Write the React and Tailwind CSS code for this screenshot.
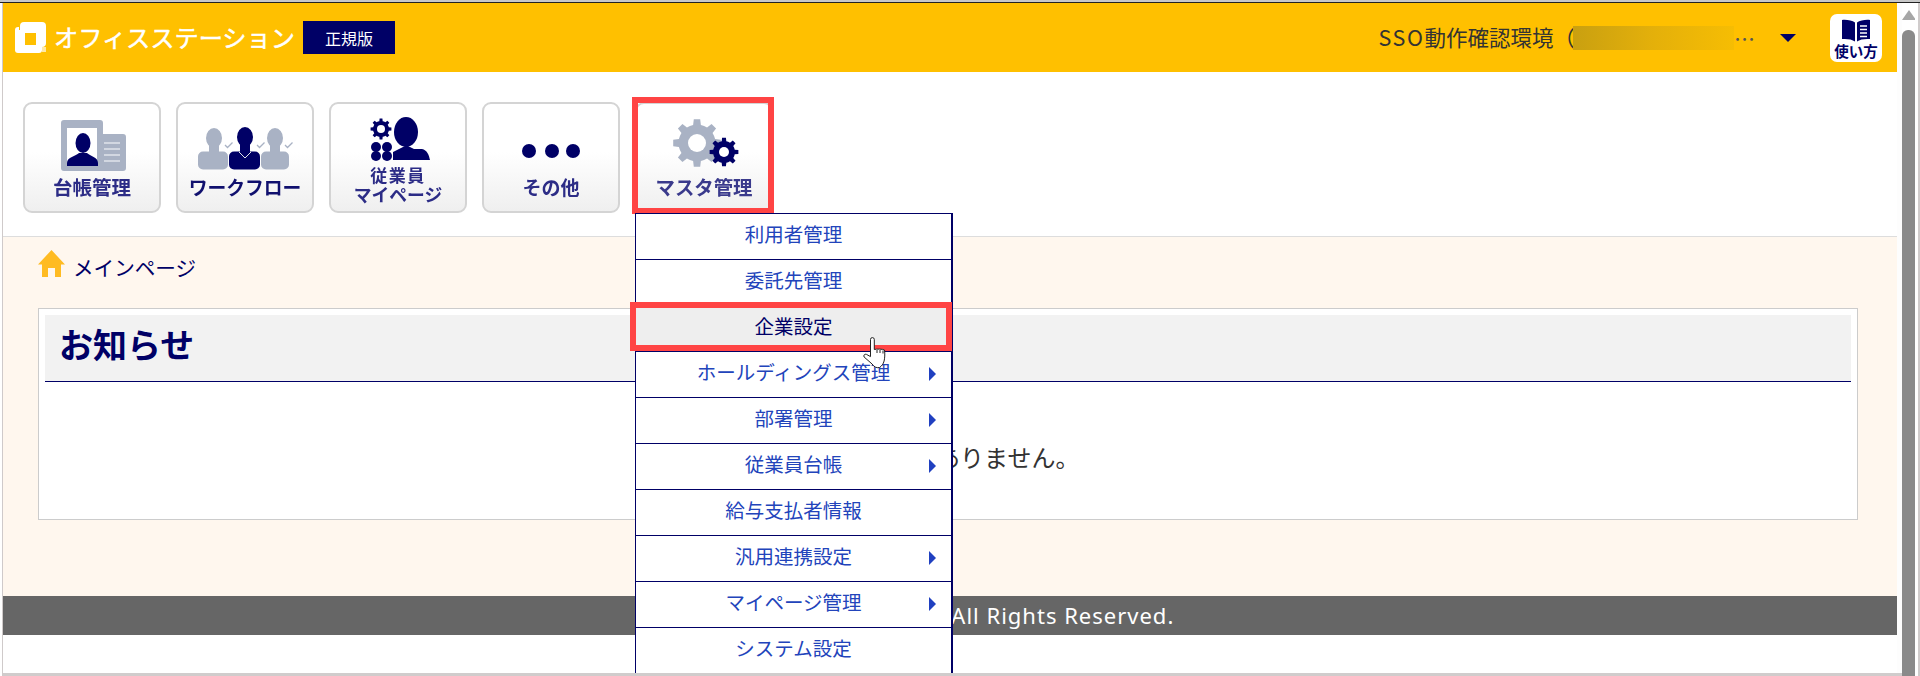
const JP = '"Noto Sans CJK JP", sans-serif';
const NAVY = '#000066';
const SLATE = '#a9b2c4';

function gearPoints(cx, cy, R, r, n) {
  const pts = [];
  const step = (Math.PI * 2) / n;
  for (let i = 0; i < n; i++) {
    const a = i * step - Math.PI / 2;
    const list = [
      [a - step * 0.5, r],
      [a - step * 0.27, r],
      [a - step * 0.17, R],
      [a + step * 0.17, R],
      [a + step * 0.27, r],
    ];
    for (const [t, d] of list) {
      pts.push(`${(cx + Math.cos(t) * d).toFixed(2)},${(cy + Math.sin(t) * d).toFixed(2)}`);
    }
  }
  return pts.join(' ');
}

function Gear({ cx, cy, R, r, hole, n = 8, fill, holeFill = '#fff' }) {
  return (
    <g>
      <polygon points={gearPoints(cx, cy, R, r, n)} fill={fill} />
      <circle cx={cx} cy={cy} r={hole} fill={holeFill} />
    </g>
  );
}

function LedgerIcon() {
  return (
    <svg width="134" height="70" viewBox="2 2 134 70" className="blur-[0.4px]">
      <path d="M41 18h36a3 3 0 0 1 3 3v11h20a3 3 0 0 1 3 3v31a3 3 0 0 1-3 3H41a3 3 0 0 1-3-3V21a3 3 0 0 1 3-3z" fill={SLATE} />
      <rect x="44" y="26" width="30" height="38" fill="#fff" />
      <ellipse cx="60" cy="41" rx="7.5" ry="10" fill={NAVY} />
      <path d="M44 64v-3c0-6 9-7 12-10h8c3 3 11 4 11 10v3z" fill={NAVY} />
      <path d="M81 41h16M81 47h16M81 53h16M81 59h16" stroke="#dfe3ea" strokeWidth="1.4" />
    </svg>
  );
}

function Person({ hx, hy, x1, x2, fill, collar }) {
  return (
    <g>
      <ellipse cx={hx} cy={hy} rx="8" ry="10" fill={fill} />
      <rect x={hx - 5} y={hy + 6} width="10" height="10" fill={fill} />
      <rect x={x1} y="49.5" width={x2 - x1} height="18" rx="5" fill={fill} />
      {collar && <path d={`M${hx - 6} 50l6 6 6-6`} stroke="#dfe3ea" strokeWidth="1" fill="none" />}
    </g>
  );
}

function WorkflowIcon() {
  const check = (x, y) => <path key={x} d={`M${x - 4} ${y}l2.5 2.5 5-5`} stroke={SLATE} strokeWidth="1.3" fill="none" />;
  return (
    <svg width="134" height="70" viewBox="2 2 134 70" className="blur-[0.4px]">
      <Person hx={38} hy={36} x1={22} x2={52} fill={SLATE} />
      <Person hx={99} hy={36} x1={85} x2={113} fill={SLATE} />
      <Person hx={69} hy={35} x1={53} x2={84} fill={NAVY} collar />
      {check(53, 43)}
      {check(85, 43)}
      {check(113, 43)}
    </svg>
  );
}

function EmployeeIcon() {
  return (
    <svg width="134" height="61" viewBox="2 2 134 61" className="blur-[0.4px]">
      <Gear cx={52} cy={27} R={10.5} r={8} hole={4} n={8} fill={NAVY} />
      <ellipse cx="77" cy="30" rx="12" ry="15" fill={NAVY} />
      <path d="M64 58v-8l6-3 6-3h3l6 3h8c5 1 7 6 8 11z" fill={NAVY} />
      {[[47, 45], [58, 45], [47, 54], [58, 54]].map(([x, y]) => (
        <circle key={`${x}-${y}`} cx={x} cy={y} r="5" fill={NAVY} />
      ))}
    </svg>
  );
}

function DotsIcon() {
  return (
    <svg width="134" height="70" viewBox="2 2 134 70">
      <circle cx="47" cy="49" r="7" fill={NAVY} />
      <circle cx="70" cy="49" r="7" fill={NAVY} />
      <circle cx="91" cy="49" r="7" fill={NAVY} />
    </svg>
  );
}

function MasterIcon() {
  return (
    <svg width="134" height="70" viewBox="2 2 134 70" className="blur-[0.4px]">
      <Gear cx={62} cy={41} R={24} r={18.5} hole={9} n={8} fill={SLATE} />
      <Gear cx={89} cy={50} R={14.5} r={11} hole={5} n={8} fill={NAVY} />
    </svg>
  );
}

function NavButton({ icon, lines, active, children }) {
  return (
    <div className="relative w-[138px] h-[111px] shrink-0">
      <div className="w-full h-full flex flex-col items-center border-2 border-[#d4d4d4] rounded-[9px] bg-gradient-to-b from-white from-45% to-[#efefef]">
        {icon}
        {lines.map((l) => (
          <div key={l.t} className={`${l.c} font-bold text-center whitespace-nowrap blur-[0.4px]`}>
            {l.t}
          </div>
        ))}
      </div>
      {active && (
        <div className="absolute left-[-3px] top-[-5px] w-[142px] h-[117px] border-[6px] border-[#ff4444] z-10 pointer-events-none" />
      )}
      {children}
    </div>
  );
}

const MENU = [
  { t: '利用者管理' },
  { t: '委託先管理' },
  { t: '企業設定', hot: true },
  { t: 'ホールディングス管理', arrow: true },
  { t: '部署管理', arrow: true },
  { t: '従業員台帳', arrow: true },
  { t: '給与支払者情報' },
  { t: '汎用連携設定', arrow: true },
  { t: 'マイページ管理', arrow: true },
  { t: 'システム設定' },
];

function Hand() {
  return (
    <svg width="26" height="32" viewBox="0 0 26 32" className="absolute left-[226px] top-[31px] z-30">
      <path
        d="M8.5 15V2.5a1.9 1.9 0 0 1 3.8 0v10c2 -.6 8.5 -.6 10.2 .5c.6 4 .2 8.5 -.4 11c-.7 3 -2.5 5 -4.5 6.5c-3.5 .8 -5.5 -.8 -7.5 -3.5l-8 -7c-1 -1.6 .6 -3.4 2.4 -2.6l4 2.2z"
        fill="#fff"
        stroke="#222"
        strokeWidth="1"
      />
      <path d="M15 13v3M18 13v3M21 13.5v3" stroke="#222" strokeWidth="1" />
    </svg>
  );
}

function Menu() {
  return (
    <div className="absolute left-0 top-[111px] w-[318px] bg-white border-l border-r-2 border-t border-[#000066] z-20">
      {MENU.map((m) => (
        <div
          key={m.t}
          className={`relative h-[46px] flex items-center justify-center border-b border-[#000066] text-[19.5px] pb-[6px] ${
            m.hot ? 'bg-[#eeeeee] text-[#000066]' : 'text-[#2244bb]'
          }`}
        >
          {m.t}
          {m.arrow && (
            <span className="absolute right-[15px] top-[15px] w-0 h-0 border-y-[7px] border-y-transparent border-l-[7px] border-l-[#2040c0]" />
          )}
          {m.hot && (
            <>
              <div className="absolute left-[-6px] top-[-4px] w-[322px] h-[49px] border-[6px] border-[#ff4444] z-10" />
              <Hand />
            </>
          )}
        </div>
      ))}
    </div>
  );
}

function Logo() {
  return (
    <svg width="32" height="32" viewBox="0 0 32 32" className="shrink-0 blur-[0.3px]">
      <rect x="5" y="0" width="26" height="25" rx="4" fill="#fff" />
      <rect x="0" y="5" width="27" height="26" rx="3" fill="#fff" />
      <path d="M4 1h1v7H4z" fill="#ffc000" />
      <rect x="27" y="25" width="4" height="5" fill="#ffe9a6" />
      <rect x="10" y="11" width="11" height="12" fill="#ffc000" />
    </svg>
  );
}

function BookIcon() {
  return (
    <svg width="30" height="23" viewBox="0 0 30 23">
      <path d="M14 3.5C11 1.2 5 .5 1 1v19c5-.4 10 .2 13 2.5z" fill={NAVY} />
      <path d="M16 3.5C19 1.2 25 .5 29 1v19c-5-.4-10 .2-13 2.5z" fill={NAVY} />
      <path d="M19 7h7M19 10.5h7M19 14h7M19 17.5h7" stroke="#fff" strokeWidth="1.4" />
    </svg>
  );
}

export default function App() {
  return (
    <div className="w-full h-[676px] overflow-hidden bg-white flex flex-col" style={{ fontFamily: JP }}>
      <div className="h-[3px] shrink-0 bg-[#c8c8c8] border-b border-[#222]" />
      <div className="flex flex-1 min-h-0">
        <div className="w-[3px] shrink-0 bg-white border-r border-[#cfcaca]" />

        <div className="flex-1 min-w-0 flex flex-col">
          <div className="flex-1 min-h-0 flex flex-col overflow-hidden">
            <header className="h-[69px] shrink-0 bg-[#ffc000] flex items-center pl-[12px]">
              <Logo />
              <span className="ml-[7px] w-[249px] text-[24.2px] text-white whitespace-nowrap [-webkit-text-stroke:0.5px_white]">オフィスステーション</span>
              <span className="w-[92px] h-[33px] bg-[#000066] text-white text-[16px] flex items-center justify-center">正規版</span>
              <div className="ml-auto flex items-center">
                <span className="text-[21.5px] text-[#333333] whitespace-nowrap">
                  <span className="tracking-[1.6px]">SSO</span>動作確認環境（
                </span>
                <span className="w-[161px] h-[24px] -ml-[2px] bg-gradient-to-r from-[#c9a010] via-[#e4b00a] to-[#f6bd03]" />
                <span className="w-[20px] text-[21px] leading-[24px] text-[#555555] text-center">…</span>
                <span className="ml-[26px] w-0 h-0 border-x-[8px] border-x-transparent border-t-[8px] border-t-[#000066]" />
                <div className="ml-[34px] mr-[15px] w-[52px] h-[48px] bg-white rounded-[7px] flex flex-col items-center pt-[5px]">
                  <BookIcon />
                  <span className="text-[14.5px] leading-[18px] font-bold text-[#000066]">使い方</span>
                </div>
              </div>
            </header>

            <nav className="h-[165px] shrink-0 border-b border-[#dddddd] flex gap-[15px] pl-[20px] pt-[30px]">
              <NavButton icon={<LedgerIcon />} lines={[{ t: '台帳管理', c: 'text-[19.5px] leading-[26px] text-[#2c2c86]' }]} />
              <NavButton icon={<WorkflowIcon />} lines={[{ t: 'ワークフロー', c: 'text-[18.8px] leading-[26px] text-[#10106e]' }]} />
              <NavButton
                icon={<EmployeeIcon />}
                lines={[
                  { t: '従業員', c: 'text-[17px] leading-[20px] tracking-[1.5px] text-[#2c2c86]' },
                  { t: 'マイページ', c: 'text-[17.8px] leading-[19px] text-[#2c2c86]' },
                ]}
              />
              <NavButton icon={<DotsIcon />} lines={[{ t: 'その他', c: 'text-[19px] leading-[26px] text-[#2c2c86]' }]} />
              <NavButton active icon={<MasterIcon />} lines={[{ t: 'マスタ管理', c: 'text-[19.4px] leading-[26px] text-[#3a3a8c]' }]}>
                <Menu />
              </NavButton>
            </nav>

            <main className="h-[359px] shrink-0 bg-[#fff7ee] pl-[35px] pt-[12px] pr-[39px]">
              <div className="h-[28px] flex items-center text-[20.6px] text-[#000066]">
                <svg width="27" height="27" viewBox="0 0 27 27" className="shrink-0">
                  <path d="M13.5 0L27 14.5h-4V27h-6v-9h-7v9H4V14.5H0z" fill="#ffbb22" />
                </svg>
                <span className="ml-[8px] mt-[9px]">メインページ</span>
              </div>
              <section className="mt-[31px] h-[212px] bg-white border border-[#cccccc] p-[6px] flex flex-col">
                <div className="h-[67px] shrink-0 bg-[#f2f2f2] border-b border-[#000066] pl-[14px] pb-[10px] flex items-center">
                  <h1 className="text-[34px] font-bold text-[#000066]">お知らせ</h1>
                </div>
                <div className="flex-1 flex items-center justify-center pt-[18px] text-[24px] text-[#333333]">お知らせはありません。</div>
              </section>
            </main>

            <footer className="h-[39px] shrink-0 bg-[#666666] flex items-center justify-center text-[22px] tracking-[1px] text-white" style={{ fontFamily: '"Noto Sans", sans-serif' }}>
              <span className="ml-[39px]">(C) F&amp;M Co.,Ltd. All Rights Reserved.</span>
            </footer>
            <div className="flex-1 bg-white" />
          </div>
          <div className="h-[3px] shrink-0 bg-[#d0cccc]" />
        </div>

        <aside className="w-[23px] shrink-0 flex bg-white">
          <div className="w-[5px] flex flex-col bg-[#fdfdfd]">
            <div className="mt-auto h-[3px] bg-[#d0cccc]" />
          </div>
          <div className="w-[13px] flex flex-col items-center pt-[7px]">
            <span className="w-0 h-0 border-x-[7px] border-x-transparent border-b-[10px] border-b-[#a6a6a6]" />
            <div className="mt-[10px] flex-1 w-full rounded-t-[6px] bg-[#8a8a8a]" />
          </div>
          <div className="w-[3px] bg-white" />
          <div className="w-[2px] bg-[#d0cccc]" />
        </aside>
      </div>
    </div>
  );
}
